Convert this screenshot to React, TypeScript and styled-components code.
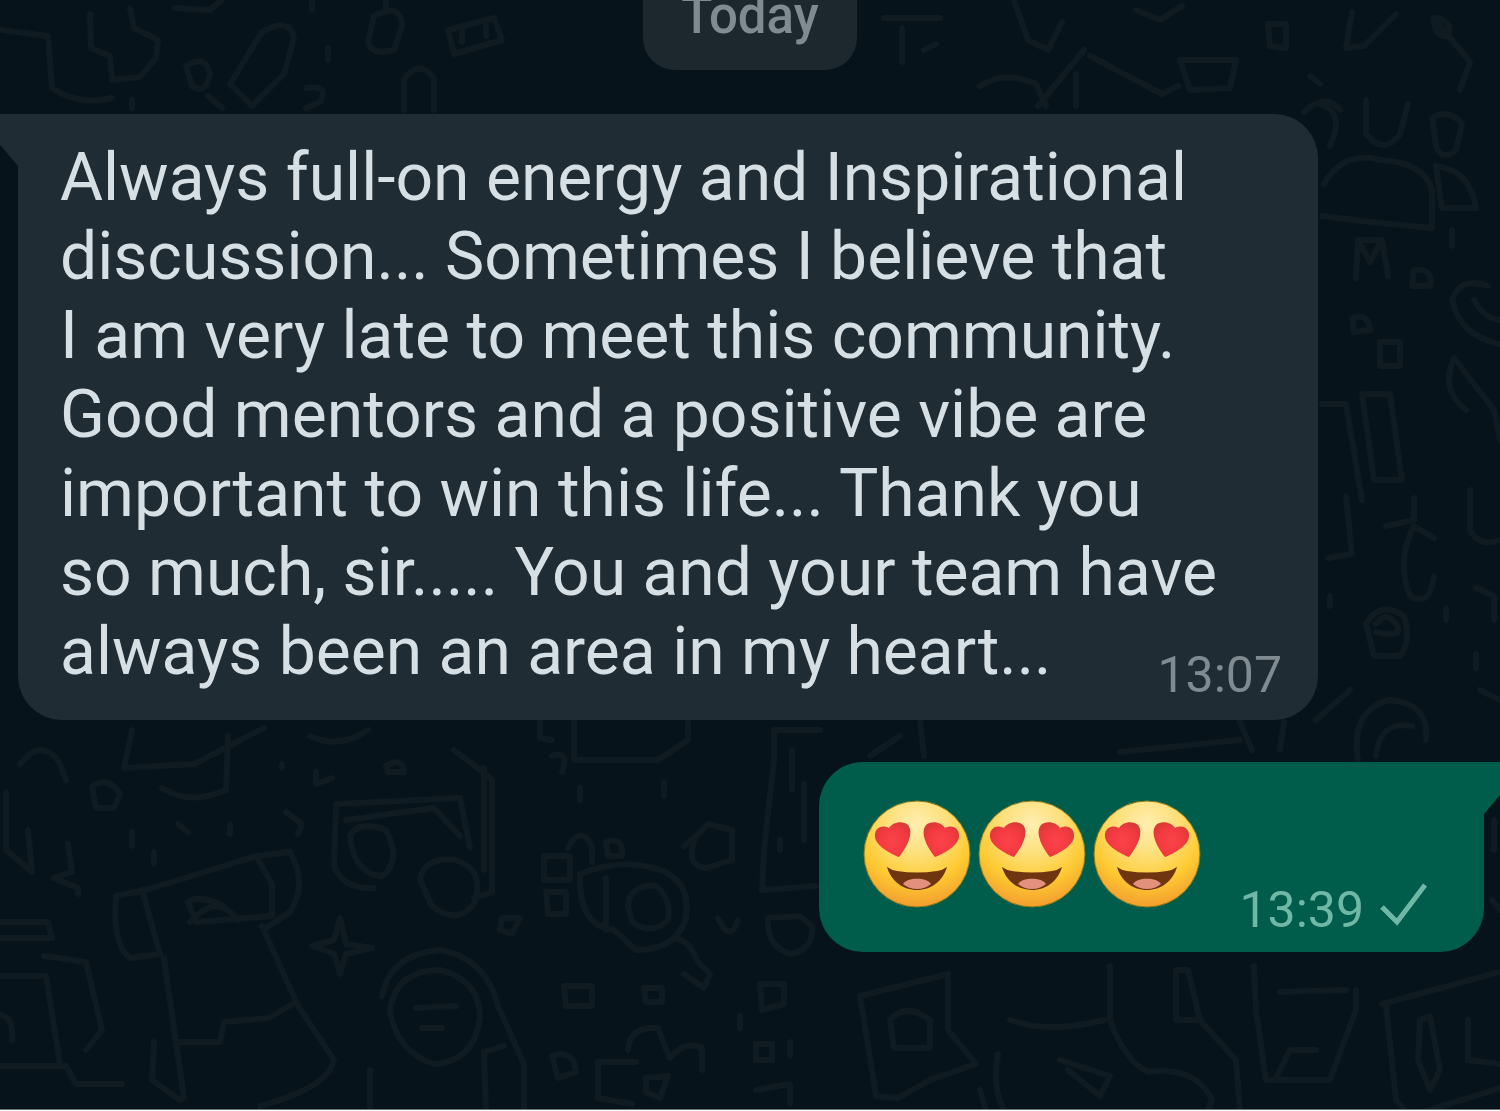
import React from "react";
import styled, { createGlobalStyle } from "styled-components";

const colors = {
  wall: "#07131a",
  doodle: "#0f1b21",
  incoming: "#202c33",
  outgoing: "#005c4b",
  text: "#d5dfe4",
  muted: "#7f8b91",
  sent: "#6fb8a6",
};

const GlobalStyle = createGlobalStyle`
  body {
    margin: 0;
    background: #ffffff;
    font-family: Roboto, "Liberation Sans", sans-serif;
  }
`;

const Chat = styled.main`
  position: relative;
  display: flex;
  flex-direction: column;
  box-sizing: border-box;
  min-height: calc(100vh - 1px);
  overflow: hidden;
  background: ${colors.wall};
  border-bottom: 1px solid #6c7376;
`;

const Wallpaper = styled.svg`
  position: absolute;
  inset: 0;
  width: 100%;
  height: 100%;
  fill: none;
  stroke: ${colors.doodle};
  stroke-width: 6;
  stroke-linecap: round;
  stroke-linejoin: round;
`;

const DayChip = styled.div`
  position: relative;
  align-self: center;
  box-sizing: border-box;
  height: 70px;
  padding: 0 38px;
  border-radius: 0 0 32px 32px;
  background: #1c282e;
  color: ${colors.muted};
  font-size: 51px;
  font-weight: 500;
  line-height: 32px;
`;

const Messages = styled.section`
  position: relative;
  display: flex;
  flex-direction: column;
  gap: 42px;
  padding: 44px 16px 44px 18px;
`;

const Bubble = styled.article<{ $outgoing?: boolean }>`
  position: relative;
  box-sizing: border-box;
  align-self: ${(p) => (p.$outgoing ? "flex-end" : "flex-start")};
  max-width: 1300px;
  border-radius: ${(p) => (p.$outgoing ? "44px 0 44px 44px" : "0 44px 44px 44px")};
  background: ${(p) => (p.$outgoing ? colors.outgoing : colors.incoming)};
`;

const IncomingBubble = styled(Bubble)`
  display: grid;
  width: 100%;
  padding: 24px 36px 29px 42px;
`;

const OutgoingBubble = styled(Bubble)`
  display: flex;
  gap: 38px;
  padding: 38px 56px 16px 44px;
`;

const Tail = styled.span<{ $outgoing?: boolean }>`
  position: absolute;
  top: 0;
  ${(p) => (p.$outgoing ? "left: 100%;" : "right: 100%;")}
  width: 44px;
  height: 52px;
  background: inherit;
  clip-path: ${(p) =>
    p.$outgoing
      ? "polygon(0 0, 100% 0, 0 100%)"
      : "polygon(0 0, 100% 0, 100% 100%)"};
`;

const MessageText = styled.p`
  grid-area: 1 / 1;
  margin: 0;
  color: ${colors.text};
  font-size: 66px;
  line-height: 79px;
  white-space: nowrap;
`;

const Time = styled.time<{ $outgoing?: boolean }>`
  grid-area: 1 / 1;
  align-self: end;
  justify-self: end;
  color: ${(p) => (p.$outgoing ? colors.sent : colors.muted)};
  font-size: 50px;
  line-height: 32px;
`;

const Emojis = styled.div`
  display: flex;
  gap: 7px;
  height: 136px;
`;

const EmojiSvg = styled.svg`
  width: 108px;
  height: 108px;
`;

const Meta = styled.div`
  display: flex;
  align-items: center;
  align-self: flex-end;
  gap: 16px;
  padding-bottom: 10px;
`;

const Check = styled.svg`
  width: 48px;
  height: 44px;
  fill: none;
  stroke: ${colors.sent};
  stroke-width: 5;
`;

function HeartEyes() {
  return (
    <EmojiSvg viewBox="0 0 108 108" role="img" aria-label="smiling face with heart eyes">
      <defs>
        <radialGradient id="face" cx="50%" cy="22%" r="80%">
          <stop offset="0" stopColor="#ffeeb0" />
          <stop offset="0.35" stopColor="#fde07c" />
          <stop offset="0.68" stopColor="#fdca32" />
          <stop offset="1" stopColor="#f39a2e" />
        </radialGradient>
        <radialGradient id="heart" cx="50%" cy="55%" r="60%">
          <stop offset="0" stopColor="#fb4449" />
          <stop offset="0.6" stopColor="#f23a40" />
          <stop offset="1" stopColor="#d93a35" />
        </radialGradient>
      </defs>
      <circle cx="54" cy="54" r="53" fill="url(#face)" stroke="#8a7a1c" strokeWidth="1" />
      <path
        d="M36 57C28 54 13 46 12 37C11 28 19 24 26 28C29 22 40 20 45 25C51 32 45 46 36 57Z"
        fill="url(#heart)"
      />
      <path
        d="M72 57C63 46 57 32 63 25C68 20 79 22 82 28C89 24 97 28 96 37C95 46 80 54 72 57Z"
        fill="url(#heart)"
      />
      <path d="M24 67Q28 70 34 71Q54 74 74 71Q80 70 84 67C80 81 68 90 54 90C40 90 28 81 24 67Z" fill="#6e3510" />
      <path d="M40 84C44 77 64 77 68 84Q62 89 54 89Q46 89 40 84Z" fill="#e3907f" />
    </EmojiSvg>
  );
}

function Doodles() {
  return (
    <Wallpaper viewBox="0 0 1500 1111" preserveAspectRatio="xMinYMin slice" aria-hidden="true">
      {/* above the first message */}
      <path d="M0 30L48 36L52 88Q78 106 112 98M90 14L91 48L110 56L112 80L140 77L156 58L158 40L134 28L130 8M175 8L210 10L222 0" />
      <path d="M186 66Q206 54 210 74Q206 96 192 86ZM230 84L262 32Q290 16 294 38L284 74L252 106ZM208 96L222 108M306 88Q330 84 320 102L306 108M374 16Q402 2 402 26L394 50Q372 56 368 42Z" />
      <path d="M404 110V80Q418 58 434 78V110M448 30L494 18L502 40L454 54ZM462 30V42M486 26V36M328 48V60M386 0V12M132 100V108M312 0V10" />
      <path d="M884 18H940M902 28V62M924 50L936 44M1014 0L1028 40L1048 50L1062 22M1084 50L1038 106M1090 56L1162 94L1178 86M1076 74V106M1180 60H1236L1230 88L1190 90ZM1136 10L1160 20L1182 6M980 86Q1004 70 1036 84L1046 106" />
      <path d="M1268 24H1286V48L1270 46ZM1352 12L1346 48L1364 46L1396 14M1434 18Q1454 20 1448 36Q1434 38 1434 18L1470 62L1460 90M1310 76L1320 84M1304 112Q1326 92 1340 110" />
      {/* right of the first message */}
      <path d="M1320 104Q1346 112 1330 146M1366 100V134Q1384 156 1400 134L1408 104M1432 118Q1450 108 1462 124L1456 150Q1442 162 1436 146ZM1324 184Q1344 150 1380 160Q1424 162 1432 190V228L1370 222L1322 216M1436 166Q1470 170 1476 208H1442Z" />
      <path d="M1356 278L1358 240H1382L1388 276M1358 240L1370 262L1382 240M1414 270Q1434 268 1430 286H1412ZM1452 230V246M1452 300Q1460 276 1488 286M1452 300Q1460 336 1500 344M1474 300Q1486 320 1500 320M1352 318Q1368 312 1370 330L1354 332ZM1380 342H1400V366H1380Z" />
      <path d="M1322 404H1346L1362 500M1362 394H1390L1402 480H1374ZM1454 358L1494 410L1500 440M1454 358Q1440 390 1466 410M1414 498V520L1386 526M1414 526L1434 538M1414 526Q1396 560 1410 596Q1430 608 1434 576M1346 496L1352 554L1328 558" />
      <path d="M1470 490V530Q1480 548 1500 540M1366 624Q1380 600 1404 616Q1412 640 1400 656H1374ZM1376 624Q1386 610 1396 624T1376 632M1476 588L1494 596V620M1330 596V606M1446 608V620M1476 654V668M1358 760Q1350 710 1390 700Q1430 704 1426 740M1376 756Q1380 720 1412 726M1480 690L1500 700M1316 720L1350 690" />
      {/* below the first message */}
      <path d="M132 730L124 768L194 764L264 728M228 736L226 790Q190 806 162 788M20 764Q40 738 58 760L66 780M92 786Q108 776 120 794L114 808H96ZM310 736Q338 750 368 730M282 764V768M316 772V784L332 778M386 766Q402 756 404 772H388Z" />
      <path d="M6 792V850L32 872L28 830M68 844L72 872L54 878L78 888V894M132 832V846M154 852V864M178 824L188 832M230 824V834M286 812L302 824L298 834M0 922H48L52 938H0M0 976H46L60 1064M0 1066H66L76 1084H122M44 956L86 962L102 1030L86 1050M0 1014Q14 1018 12 1040" />
      <path d="M116 896L146 890L256 856L290 852Q308 884 290 912L266 928M116 896Q112 944 130 958L160 954L142 890M256 856L272 884V916L196 922L188 902Q200 894 224 906M190 922Q216 892 238 920M164 958L176 1042L184 1098M262 926L298 1006L334 1060Q328 1088 260 1106M178 1042H220L224 1022L268 1018L296 1002M154 1042L152 1080L180 1100" />
      <path d="M340 918L346 944L372 948L346 954L340 974L334 954L312 946L334 940ZM336 804L460 798L470 848M336 804L334 866Q344 890 374 888M346 820L434 808L460 836M350 836Q358 820 386 830Q402 862 382 876Q354 874 350 836M454 750L488 776L492 780V892L474 898M484 768V870M420 880Q424 856 456 860Q486 870 474 904Q456 926 432 906Z" />
      <path d="M382 996Q390 954 440 950Q486 958 498 1006L524 1064V1111M390 1010Q396 970 440 970Q480 980 480 1018Q474 1062 434 1064Q396 1052 390 1010M416 1008L456 1006M422 1028H442M370 1111V1070M486 1111L484 1052L504 1046M540 722V738L552 740M574 722V760H658L688 740V722M552 756Q570 750 562 772" />
      <path d="M544 856V880H570V856ZM568 848Q580 824 592 846V862M606 842Q624 836 622 856H608ZM546 892H566V914H548ZM580 874Q620 858 654 868Q692 878 686 918Q676 950 636 950L614 930Q578 926 580 874M606 878V930M628 906Q630 884 656 886Q672 900 668 920Q652 936 632 922ZM684 846L696 836L708 824L732 830V860L706 868Q684 866 696 836" />
      <path d="M502 918H520L512 934L500 930ZM674 938Q690 940 698 962L710 974L704 988L684 974M564 986H592V1006H566ZM644 988H662V1002H646ZM552 1056Q574 1048 576 1072L558 1078ZM628 1050Q630 1026 658 1028L668 1054M598 1062H636M598 1062V1098L632 1104M646 1078L668 1076L660 1098L646 1092ZM670 1058Q684 1040 702 1048V1070M580 788V800M664 782V796M718 918Q730 944 738 920" />
      <path d="M820 730H774V760L764 850L762 890L816 886M792 750V790M804 784V840M780 840V850M768 918L800 916L812 926Q814 950 790 954Q766 946 768 918M760 984H784V1004L762 1010ZM740 1016V1028M756 1044H772V1060H756ZM790 1042V1056M756 1090L790 1084V1104" />
      <path d="M920 720L924 756M1240 722L1252 750M1284 722L1280 750M1120 752L1240 740M900 736L870 756" />
      <path d="M860 996L948 974V1030L976 1064L930 1080L898 1098L876 1096ZM890 1020Q906 1002 930 1020V1048H894ZM1110 966V1020Q1124 1060 1148 1072Q1196 1066 1212 1100Q1204 1124 1176 1146M998 1054Q990 1100 1014 1122H1074M1060 1060L1110 1076L1100 1096L1068 1070M1176 970V1020H1200L1188 970ZM1010 1020Q1050 1034 1104 1020" />
      <path d="M1254 966L1256 1010L1266 1080L1330 1080L1356 1010V990M1280 992L1346 990M1276 1078L1290 1050H1316M1382 1004L1500 972M1386 1006L1396 1100L1410 1116L1500 1088M1420 1020L1430 1016L1440 1070L1430 1090L1418 1060ZM1468 1020V1060L1500 1064M1200 1020L1236 1060L1240 1111M980 1090L986 1111" />
      {/* edge of the second message */}
      <path d="M1494 820V850M1492 900L1500 910" />
    </Wallpaper>
  );
}

export default function App() {
  return (
    <>
      <GlobalStyle />
      <Chat>
        <Doodles />
        <DayChip>Today</DayChip>
        <Messages>
          <IncomingBubble>
            <Tail />
            <MessageText>
              Always full-on energy and Inspirational
              <br />
              discussion... Sometimes I believe that
              <br />
              I am very late to meet this community.
              <br />
              Good mentors and a positive vibe are
              <br />
              important to win this life... Thank you
              <br />
              so much, sir..... You and your team have
              <br />
              always been an area in my heart...
            </MessageText>
            <Time>13:07</Time>
          </IncomingBubble>
          <OutgoingBubble $outgoing>
            <Tail $outgoing />
            <Emojis>
              <HeartEyes />
              <HeartEyes />
              <HeartEyes />
            </Emojis>
            <Meta>
              <Time $outgoing>13:39</Time>
              <Check viewBox="0 0 48 44" role="img" aria-label="Sent">
                <path d="M2 25L17 40L45 3" />
              </Check>
            </Meta>
          </OutgoingBubble>
        </Messages>
      </Chat>
    </>
  );
}
